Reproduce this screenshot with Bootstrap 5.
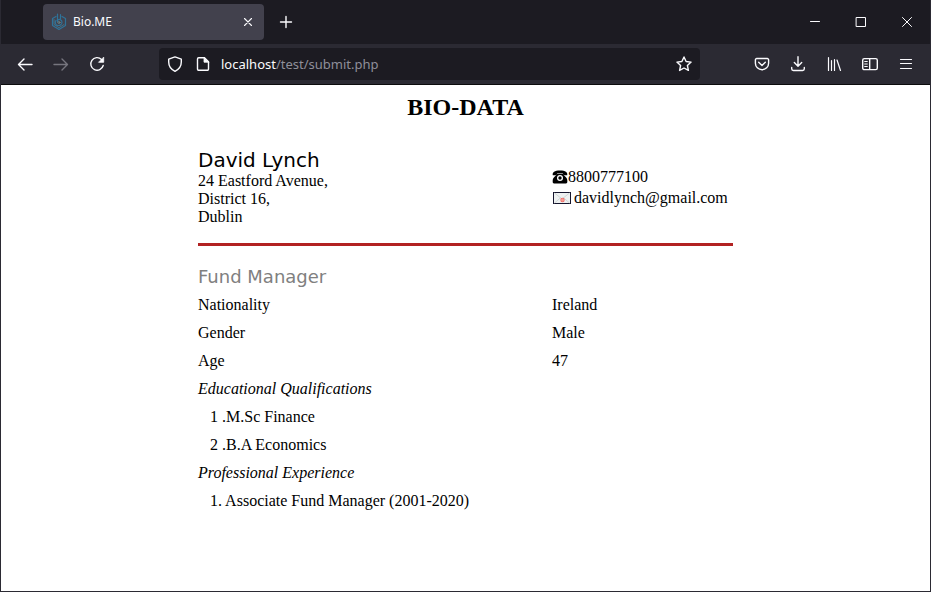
<!DOCTYPE html>
<html lang="en">
<head>
<meta charset="utf-8">
<meta name="viewport" content="width=device-width, initial-scale=1">
<title>Bio.ME</title>
<link href="https://cdn.jsdelivr.net/npm/bootstrap@5.3.0/dist/css/bootstrap.min.css" rel="stylesheet">
<style>
  body { font-family: "Liberation Serif", "Times New Roman", serif; font-size: 16px; line-height: 18px; color: #000; background: #fff; }
  .window { min-height: 100vh; border: 1px solid #2b2a33; border-top: 0; }
  .chrome { font-family: "Noto Sans", "Open Sans", sans-serif; color: #fbfbfe; }
  .chrome svg { display: block; fill: none; stroke: currentColor; stroke-width: 1.4; stroke-linecap: round; stroke-linejoin: round; }
  .tab-strip { height: 44px; background: #1c1b22; padding-left: 42px; }
  .tab-item { width: 221px; height: 36px; border-radius: 4px; background: #42414d; padding: 0 8px; font-size: 12px; }
  .tab-label { padding-left: 6px; }
  .tool-row { height: 41px; background: #2b2a33; border-bottom: 1px solid #0c0c0d; padding: 0 8px; }
  .icon-btn { width: 32px; height: 32px; padding: 0; border: 0; background: none; color: inherit; display: flex; align-items: center; justify-content: center; }
  .tab-close { width: 16px; }
  .new-tab { margin-left: 6px; }
  .icon-btn:disabled { color: #76757e; }
  .win-btn { width: 46px; height: 44px; }
  .win-btn svg { stroke-width: 1; }
  .tool-set { gap: 4px; }
  .address-bar { width: 541px; height: 32px; border-radius: 4px; background: #1c1b22; font-size: 13px; margin-left: 46px; padding: 0 2px; }
  .address-bar .icon-btn { width: 28px; }
  .url { padding-left: 4px; }
  .url-rest { color: #8f8f9a; }
  .sheet { max-width: 535px; padding-top: 8px; }
  .sheet-title { font-size: 24px; line-height: 28px; font-weight: 700; margin-bottom: 27px; }
  .split { display: grid; grid-template-columns: 354fr 181fr; }
  .person { font-family: "DejaVu Sans", Verdana, sans-serif; font-size: 20px; line-height: 24px; font-weight: 400; margin: 0; }
  .postal { line-height: 18px; margin: 0; }
  .contact { line-height: 21px; padding-top: 18px; }
  .contact a { color: inherit; text-decoration: none; }
  .rule { border: 0; height: 3px; background: #b22222; opacity: 1; margin: 17px 0; }
  .role { font-family: "DejaVu Sans", Verdana, sans-serif; font-size: 18px; line-height: 28px; font-weight: 400; color: #808080; margin: 0; }
  .facts { width: 100%; table-layout: fixed; }
  .facts th, .facts td { height: 28px; padding: 0; font-weight: 400; }
  .facts .col-label { width: 354px; }
  .facts .entry { padding-left: 12px; }
</style>
</head>
<body>
<div class="window">
  <header class="chrome">
    <div class="tab-strip d-flex align-items-center">
      <div class="tab-item d-flex align-items-center">
        <svg width="16" height="18" viewBox="0 0 16 18" aria-hidden="true">
          <g stroke="#2f7399" stroke-width="1.200"><path d="M5 3.500 1.500 5.500v7L8 16.500l6.500-4v-7L11 3.500"/><path d="M6.500 1v8M9.500 1.500v4"/><path d="M6.500 7.500C8 5.500 11 6.500 11 9.300S8 13.200 5.500 12C4 11 4 8.500 5 7.500"/></g>
          <path stroke="#4aa0bd" stroke-width=".8" opacity=".6" d="M3 6.500v5l5 3.200 5-3.200"/><circle cx="8" cy="9.500" r="1" stroke="#718a88" stroke-width=".8"/>
        </svg>
        <span class="tab-label flex-grow-1">Bio.ME</span>
        <button class="icon-btn tab-close" aria-label="Close tab"><svg width="10" height="10" viewBox="0 0 10 10"><path stroke-width="1.100" d="m1.500 1.500 7 7m0-7-7 7"/></svg></button>
      </div>
      <button class="icon-btn new-tab" aria-label="New tab"><svg width="14" height="14" viewBox="0 0 14 14"><path d="M7 1.500v11M1.500 7h11"/></svg></button>
      <div class="d-flex ms-auto">
        <button class="icon-btn win-btn" aria-label="Minimize"><svg width="12" height="12" viewBox="0 0 12 12"><path d="M1.500 5.500h9"/></svg></button>
        <button class="icon-btn win-btn" aria-label="Maximize"><svg width="12" height="12" viewBox="0 0 12 12"><path d="M1.500 1.500h9v9h-9z"/></svg></button>
        <button class="icon-btn win-btn" aria-label="Close window"><svg width="12" height="12" viewBox="0 0 12 12"><path d="m1.500 1.500 9 9m0-9-9 9"/></svg></button>
      </div>
    </div>
    <nav class="tool-row d-flex align-items-center" aria-label="Browser toolbar">
      <div class="d-flex tool-set">
        <button class="icon-btn" aria-label="Back"><svg width="16" height="16" viewBox="0 0 16 16"><path d="M15 8.500H1.500M7 3 1.500 8.500 7 14"/></svg></button>
        <button class="icon-btn" aria-label="Forward" disabled><svg width="16" height="16" viewBox="0 0 16 16"><path d="M1 8.500h13.500M9 3l5.500 5.500L9 14"/></svg></button>
        <button class="icon-btn" aria-label="Reload"><svg width="16" height="16" viewBox="0 0 16 16"><path d="M14.200 9.500A6.300 6.300 0 1 1 12.500 3.400"/><path fill="currentColor" stroke-width=".8" d="M14.700 1.500v4.800H9.900z"/></svg></button>
      </div>
      <div class="address-bar d-flex align-items-center">
        <button class="icon-btn" aria-label="Tracking protection"><svg width="16" height="16" viewBox="0 0 16 16"><path d="M8 .9 14.300 3.200V6c0 4.500-2.200 7.300-6.300 9.300C3.900 13.300 1.700 10.500 1.700 6V3.200z"/></svg></button>
        <button class="icon-btn" aria-label="Site information"><svg width="16" height="16" viewBox="0 0 16 16"><path d="M9.500 1.700H3.700a1.200 1.200 0 0 0-1.200 1.200v10.200a1.200 1.200 0 0 0 1.200 1.200h8.600a1.200 1.200 0 0 0 1.200-1.200V5.700z"/><path fill="currentColor" stroke-width=".8" d="M9 1.500v4.700h4.700z"/></svg></button>
        <span class="url flex-grow-1"><span>localhost</span><span class="url-rest">/test/submit.php</span></span>
        <button class="icon-btn" aria-label="Bookmark this page"><svg width="16" height="16" viewBox="0 0 16 16"><path d="m8 1 2.100 4.500 5 .6-3.700 3.400 1 4.900L8 12l-4.400 2.400 1-4.900L.9 6.100l5-.6z"/></svg></button>
      </div>
      <div class="d-flex tool-set ms-auto">
        <button class="icon-btn" aria-label="Save to Pocket"><svg width="16" height="16" viewBox="0 0 16 16"><path d="M2.700 2.500h10.600a1.300 1.300 0 0 1 1.300 1.300v3.400a6.600 6.600 0 0 1-13.200 0V3.800a1.300 1.300 0 0 1 1.300-1.300z"/><path d="M4.700 6.200 8 9.400l3.300-3.200"/></svg></button>
        <button class="icon-btn" aria-label="Downloads"><svg width="16" height="16" viewBox="0 0 16 16"><path d="M8 .8V10M4.300 6.500 8 10.200l3.700-3.700M1.700 11.500v1.300c0 1 .6 1.700 1.700 1.700h9.200c1.100 0 1.700-.7 1.700-1.700v-1.300"/></svg></button>
        <button class="icon-btn" aria-label="Library"><svg width="16" height="16" viewBox="0 0 16 16"><path stroke-width="1.200" d="M2.500 1.500v13M5.500 4.500v10M8.500 3.500v11M11 4l3.500 10.500"/></svg></button>
        <button class="icon-btn" aria-label="Sidebars"><svg width="16" height="16" viewBox="0 0 16 16"><rect x=".7" y="2.600" width="14.600" height="11" rx="1.600"/><path d="M7.700 2.800v10.600"/><path stroke-width="1" d="M2.700 5.500h2.600M2.700 8h2.600M2.700 10.500h2.600"/></svg></button>
        <button class="icon-btn" aria-label="Application menu"><svg width="16" height="16" viewBox="0 0 16 16"><path stroke-width="1.200" d="M2.500 3.500h11M2.500 7.500h11M2.500 12.500h11"/></svg></button>
      </div>
    </nav>
  </header>
  <main class="sheet container px-0">
    <h1 class="sheet-title text-center">BIO-DATA</h1>
    <section class="split">
      <div>
        <h2 class="person">David Lynch</h2>
        <address class="postal">24 Eastford Avenue,<br>District 16,<br>Dublin</address>
      </div>
      <div class="contact">
        <div class="d-flex align-items-center">
          <svg width="16" height="14" viewBox="0 0 16 14" aria-hidden="true"><path d="M.8 5.200C.1 2.300 2.500.5 8 .5s7.900 1.800 7.200 4.700h-3.800L10.800 3.200H5.200L4.600 5.200z"/><path fill-rule="evenodd" d="M5 3.800h6c.4 1.500 1.600 2.300 2.900 3.400.9.800 1.400 2 1.400 3.500v1.400c0 .8-.5 1.300-1.300 1.300H2c-.8 0-1.300-.5-1.300-1.300v-1.400c0-1.500.5-2.700 1.400-3.500C3.400 6.100 4.600 5.300 5 3.800zM8 5a3 3 0 1 0 0 6 3 3 0 0 0 0-6zm0 1.300a1.700 1.700 0 1 1 0 3.400 1.700 1.700 0 0 1 0-3.400z"/></svg>
          <span>8800777100</span>
        </div>
        <div class="d-flex align-items-center">
          <svg width="22" height="14" viewBox="0 0 22 14" aria-hidden="true"><rect x="1.500" y="1.500" width="17" height="11" fill="#eef1f1" stroke="#16162e"/><path d="m2.500 12 6-5.200M17.500 12l-6-5.200M2.500 2l7.500 6 7.500-6" fill="none" stroke="#c6cece" stroke-width=".8"/><circle cx="10.500" cy="9" r="2.200" fill="#ef6b64"/><circle cx="10.500" cy="9" r=".9" fill="none" stroke="#ffd5d0" stroke-width=".6"/></svg>
          <a href="mailto:davidlynch@gmail.com">davidlynch@gmail.com</a>
        </div>
      </div>
    </section>
    <hr class="rule">
    <h3 class="role">Fund Manager</h3>
    <table class="facts">
      <colgroup><col class="col-label"><col></colgroup>
      <tbody>
        <tr><th scope="row">Nationality</th><td>Ireland</td></tr>
        <tr><th scope="row">Gender</th><td>Male</td></tr>
        <tr><th scope="row">Age</th><td>47</td></tr>
        <tr><th colspan="2"><i>Educational Qualifications</i></th></tr>
        <tr><td colspan="2" class="entry">1 .M.Sc Finance</td></tr>
        <tr><td colspan="2" class="entry">2 .B.A Economics</td></tr>
        <tr><th colspan="2"><i>Professional Experience</i></th></tr>
        <tr><td colspan="2" class="entry">1. Associate Fund Manager (2001-2020)</td></tr>
      </tbody>
    </table>
  </main>
</div>
<script src="https://cdn.jsdelivr.net/npm/bootstrap@5.3.0/dist/js/bootstrap.bundle.min.js"></script>
</body>
</html>
